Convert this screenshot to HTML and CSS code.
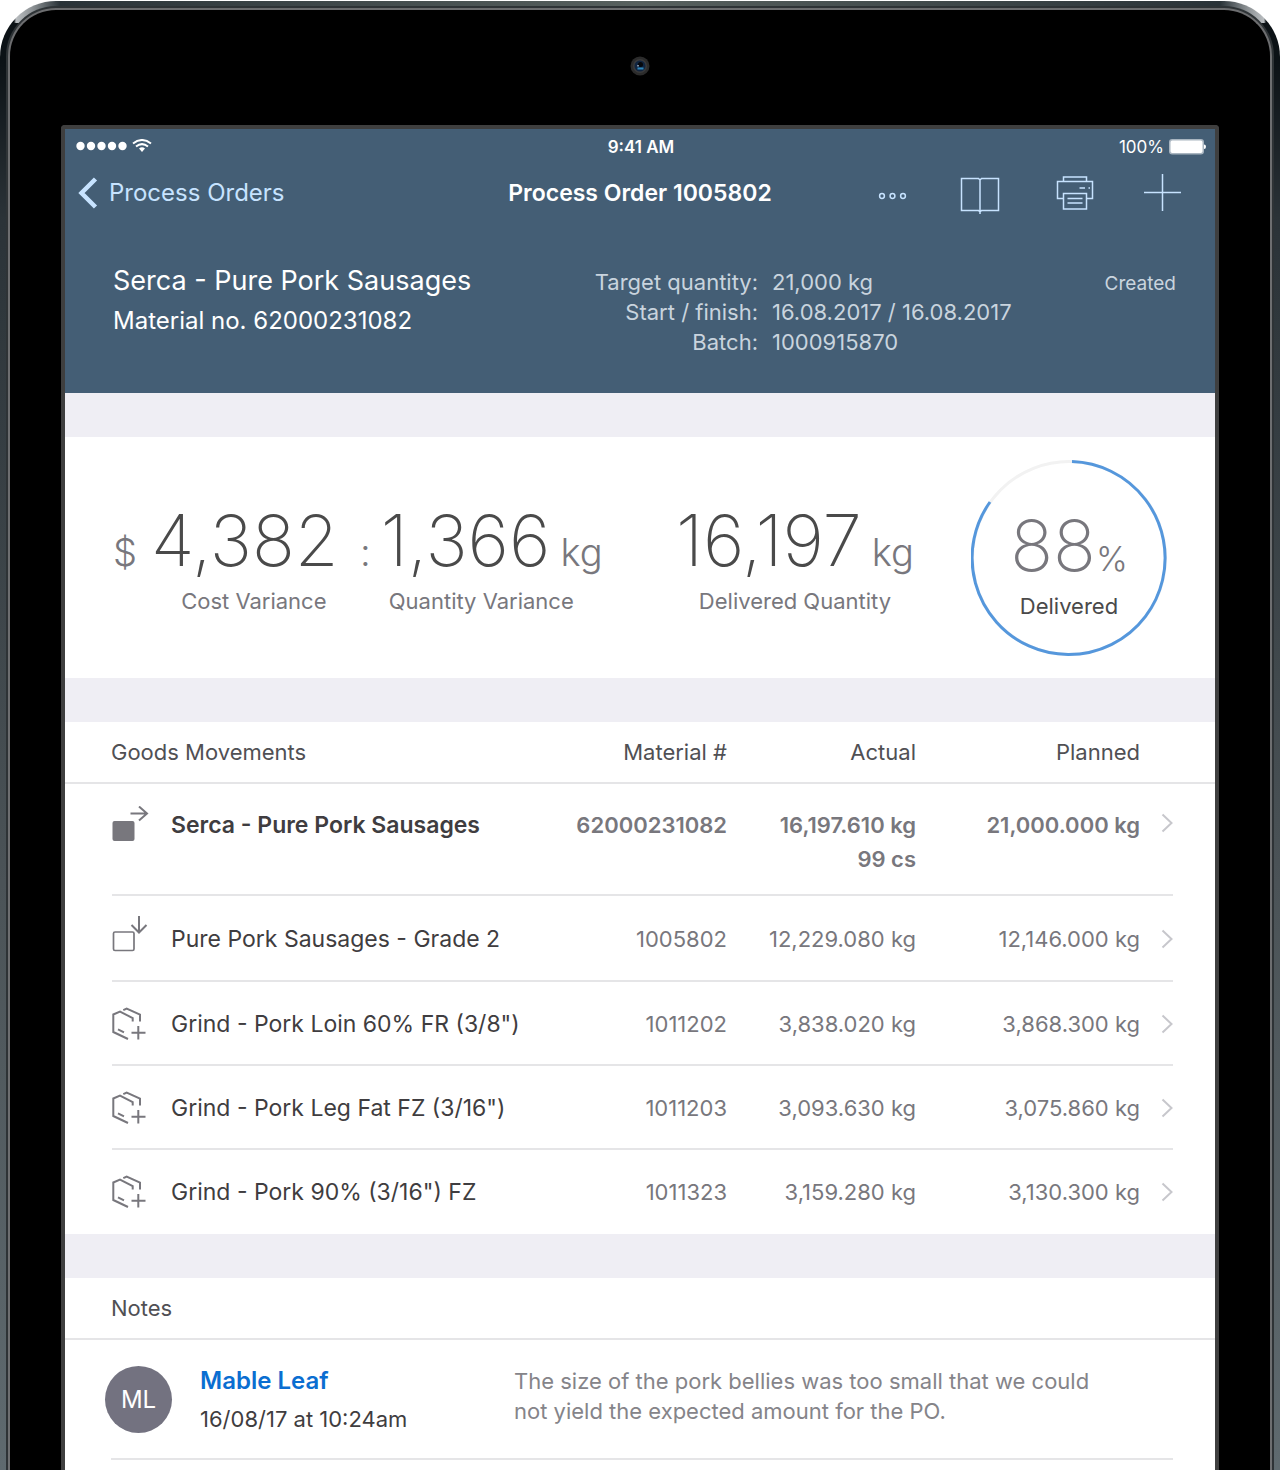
FILE: index.html
```html
<!DOCTYPE html>
<html lang="en">
<head>
<meta charset="utf-8">
<meta name="viewport" content="width=device-width, initial-scale=1">
<title>Process Order 1005802</title>
<link rel="stylesheet" href="styles.css">
</head>
<body>
<svg class="sprite" aria-hidden="true">
  <symbol id="chevron" viewBox="0 0 12 20"><path d="M1.5 1.500 10.500 10 1.500 18.500" fill="none" stroke="#c7c7cc" stroke-width="2"/></symbol>
  <symbol id="package" viewBox="0 0 36 36"><path d="M16 33 1.300 26V8.500L8 5.700 20.700 12V15.500M11.300 4.200 14.700 2.500 28 8.700V15.500M6 23.300 12 26.300M26.300 20V33.500M19.500 26.800H33.500" fill="none" stroke="#78777d" stroke-width="2"/></symbol>
</svg>
<div class="device">
  <div class="bezel">
    <svg class="camera" viewBox="0 0 20 20" aria-hidden="true">
      <circle cx="10" cy="10" r="9.500" fill="#2b2b2b"/>
      <circle cx="10" cy="10" r="7" fill="#3a3a3b"/>
      <circle cx="10" cy="10" r="5.500" fill="#10243f"/>
      <circle cx="10.500" cy="8.500" r="2.500" fill="#05070c"/>
      <rect x="7.500" y="11.500" width="6" height="2" fill="#2d86bb"/>
      <rect x="7" y="9" width="2" height="1.500" fill="#7d8ba0"/>
    </svg>
    <main class="screen">
      <header class="top">
        <div class="status">
          <span class="signal">
            <svg width="76" height="16" viewBox="0 2 76 16" role="img" aria-label="Full signal, Wi-Fi on">
              <g fill="#fff"><circle cx="4.500" cy="9" r="4.200"/><circle cx="15" cy="9" r="4.200"/><circle cx="25.500" cy="9" r="4.200"/><circle cx="36" cy="9" r="4.200"/><circle cx="46.500" cy="9" r="4.200"/></g>
              <g fill="none" stroke="#fff" stroke-width="2"><path d="M57 6.500Q66 -0.500 75 6.500"/><path d="M60 9.500Q66 4.800 72 9.500"/></g>
              <path d="M63 11.500Q66 9.200 69 11.500L66 15Z" fill="#fff"/>
            </svg>
          </span>
          <span class="time">9:41 AM</span>
          <span class="battery">100%
            <svg width="37" height="16" viewBox="0 0 37 16" aria-hidden="true">
              <rect x=".75" y=".75" width="33.500" height="14" rx="2.500" fill="#fff" stroke="#a9b5c0" stroke-width="1.500"/>
              <path d="M35 5.500q2 0 2 2.300t-2 2.300z" fill="#fff"/>
            </svg>
          </span>
        </div>
        <nav class="nav">
          <a class="back" href="#orders">
            <svg width="20" height="32" viewBox="0 0 20 32" aria-hidden="true"><path d="M17.500 2 3.500 16 17.500 30" fill="none" stroke="#c7e3ff" stroke-width="4.500"/></svg>
            Process Orders
          </a>
          <h1 class="title">Process Order 1005802</h1>
          <div class="actions">
            <button type="button" aria-label="More">
              <svg width="30" height="38" viewBox="0 0 30 38"><g fill="none" stroke="#c7e3ff" stroke-width="1.500"><circle cx="4" cy="22" r="2.400"/><circle cx="14.500" cy="22" r="2.400"/><circle cx="25" cy="22" r="2.400"/></g></svg>
            </button>
            <button type="button" aria-label="Manual">
              <svg class="book" width="46" height="38" viewBox="0 0 46 38"><path d="M22 6 20.500 4.500H3.500V36.500H20.500L22 38 23.500 36.500H40.500V4.500H23.500ZM22 5V40" fill="none" stroke="#c7e3ff" stroke-width="1.500"/></svg>
            </button>
            <button type="button" aria-label="Print">
              <svg width="40" height="38" viewBox="0 0 40 38"><g fill="none" stroke="#c7e3ff" stroke-width="1.500"><path d="M9.500 7.500V3H32.500V7.500M9.500 24.500H3.500V7.500H38.500V24.500H32.500"/><path d="M9.500 19.500H32.500V35H9.500ZM13.500 24.500H28.500M13.500 29H28.500M25.500 14H31M34.500 14H36"/></g></svg>
            </button>
            <button type="button" aria-label="Add">
              <svg width="38" height="38" viewBox="0 0 38 38"><path d="M18.500 0V37M0 18.500H37" fill="none" stroke="#c7e3ff" stroke-width="1.500"/></svg>
            </button>
          </div>
        </nav>
        <div class="summary">
          <div class="subject">
            <h2 class="product">Serca - Pure Pork Sausages</h2>
            <p class="material">Material no. 62000231082</p>
          </div>
          <dl class="facts">
            <dt>Target quantity:</dt><dd>21,000 kg</dd>
            <dt>Start / finish:</dt><dd>16.08.2017 / 16.08.2017</dd>
            <dt>Batch:</dt><dd>1000915870</dd>
          </dl>
          <p class="state">Created</p>
        </div>
      </header>

      <section class="panel kpis" aria-label="Key figures">
        <div class="kpi kpi-cost">
          <p class="figure"><span class="unit">$</span><span class="value">4,382</span></p>
          <p class="caption">Cost Variance</p>
        </div>
        <div class="kpi">
          <p class="figure"><span class="colon">:</span><span class="value">1,366</span><span class="unit">kg</span></p>
          <p class="caption">Quantity Variance</p>
        </div>
        <div class="kpi">
          <p class="figure"><span class="value">16,197</span><span class="unit">kg</span></p>
          <p class="caption">Delivered Quantity</p>
        </div>
        <div class="ring">
          <svg viewBox="0 0 196 196" aria-hidden="true">
            <circle cx="98" cy="98" r="96.500" fill="none" stroke="#f2f2f2" stroke-width="3"/>
            <path d="M101 1.550A96.500 96.500 0 1 1 19 42" fill="none" stroke="#5597dc" stroke-width="3"/>
          </svg>
          <p class="figure"><span class="value">88</span><span class="percent">%</span></p>
          <p class="caption">Delivered</p>
        </div>
      </section>

      <section class="panel">
        <table class="goods">
          <colgroup><col class="c-icon"><col><col class="c-material"><col class="c-actual"><col class="c-planned"><col class="c-open"></colgroup>
          <thead>
            <tr><th colspan="2" scope="col">Goods Movements</th><th scope="col">Material #</th><th scope="col">Actual</th><th scope="col">Planned</th><td></td></tr>
          </thead>
          <tbody>
            <tr class="main">
              <td class="icon"><svg viewBox="0 0 38 36" aria-hidden="true"><rect x="1.500" y="15" width="22" height="20" rx="2" fill="#78777d"/><path d="M19.500 7.500H36M28 0.500 36 7.500 28 14.500" fill="none" stroke="#78777d" stroke-width="2"/></svg></td>
              <th scope="row">Serca - Pure Pork Sausages</th><td>62000231082</td><td>16,197.610 kg<br>99 cs</td><td>21,000.000 kg</td>
              <td><a href="#62000231082" aria-label="Open 62000231082"><svg class="open"><use href="#chevron"/></svg></a></td>
            </tr>
            <tr class="second">
              <td class="icon"><svg viewBox="0 0 38 36" aria-hidden="true"><rect x="2.500" y="16" width="20.500" height="18.500" rx="1.500" fill="none" stroke="#78777d" stroke-width="1.700"/><path d="M28 0V16.500M20.500 9 28 16.500 35.500 9" fill="none" stroke="#78777d" stroke-width="2"/></svg></td>
              <th scope="row">Pure Pork Sausages - Grade 2</th><td>1005802</td><td>12,229.080 kg</td><td>12,146.000 kg</td>
              <td><a href="#1005802" aria-label="Open 1005802"><svg class="open"><use href="#chevron"/></svg></a></td>
            </tr>
            <tr>
              <td class="icon"><svg aria-hidden="true"><use href="#package"/></svg></td>
              <th scope="row">Grind - Pork Loin 60% FR (3/8")</th><td>1011202</td><td>3,838.020 kg</td><td>3,868.300 kg</td>
              <td><a href="#1011202" aria-label="Open 1011202"><svg class="open"><use href="#chevron"/></svg></a></td>
            </tr>
            <tr>
              <td class="icon"><svg aria-hidden="true"><use href="#package"/></svg></td>
              <th scope="row">Grind - Pork Leg Fat FZ (3/16")</th><td>1011203</td><td>3,093.630 kg</td><td>3,075.860 kg</td>
              <td><a href="#1011203" aria-label="Open 1011203"><svg class="open"><use href="#chevron"/></svg></a></td>
            </tr>
            <tr>
              <td class="icon"><svg aria-hidden="true"><use href="#package"/></svg></td>
              <th scope="row">Grind - Pork 90% (3/16") FZ</th><td>1011323</td><td>3,159.280 kg</td><td>3,130.300 kg</td>
              <td><a href="#1011323" aria-label="Open 1011323"><svg class="open"><use href="#chevron"/></svg></a></td>
            </tr>
          </tbody>
        </table>
      </section>

      <section class="panel notes">
        <h2 class="notes-title">Notes</h2>
        <article class="note">
          <span class="avatar" aria-hidden="true">ML</span>
          <div class="author">
            <a class="name" href="#mable-leaf">Mable Leaf</a>
            <time datetime="2017-08-16T10:24">16/08/17 at 10:24am</time>
          </div>
          <p class="message">The size of the pork bellies was too small that we could not yield the expected amount for the PO.</p>
        </article>
      </section>
    </main>
  </div>
</div>
</body>
</html>
```
FILE: styles.css
```css
* { box-sizing: border-box; }

body {
  display: flex;
  min-height: 100vh;
  margin: 0;
  background: #fff;
  color: #78777d;
  font: 22px/30px Inter, "Liberation Sans", sans-serif;
}

h1, h2, p, dl, dd { margin: 0; font-weight: 400; }
a { color: inherit; text-decoration: none; }
svg { display: block; flex: none; }
.sprite { position: absolute; width: 0; height: 0; }

/* Tablet body */
.device {
  flex: 1;
  display: flex;
  margin-top: 1px;
  padding: 7px 8px 0;
  border-radius: 56px 56px 0 0;
  background:
    linear-gradient(90deg, transparent 14px, #b9bdc0 16px, #8e9396 32px, #2a3338 60px, transparent 61px) left top / 62px 22px no-repeat,
    linear-gradient(270deg, transparent 14px, #b9bdc0 16px, #8e9396 32px, #2a3338 60px, transparent 61px) right top / 62px 22px no-repeat,
    linear-gradient(90deg, #2a3338, #58615f 50%, #2a3338) center top / calc(100% - 120px) 8px no-repeat,
    linear-gradient(#0c1216 60px, #2b3338 220px, #4b5357 60%, #5f6a6f);
}

.bezel {
  flex: 1;
  display: flex;
  flex-direction: column;
  border: 2px solid #6d6e70;
  border-bottom: 0;
  border-radius: 48px 48px 0 0;
  padding: 46px 51px 0;
  background: #000;
  box-shadow: 0 0 0 2px #2e3336;
}

.camera { width: 20px; height: 20px; margin: 0 auto 49px; }

.screen {
  flex: 1;
  display: flex;
  flex-direction: column;
  gap: 44px;
  border: 4px solid #3f3f3f;
  border-bottom: 0;
  border-radius: 4px 4px 0 0;
  background: #efeef4;
}

/* Header */
.top { padding-bottom: 36px; background: #445e75; color: #fff; }

.status {
  display: grid;
  grid-template-columns: 1fr auto 1fr;
  align-items: center;
  height: 36px;
  padding: 0 9px 0 11px;
  font-size: 17px;
}
.time { font-weight: 600; }
.battery { display: flex; justify-content: flex-end; align-items: center; gap: 5px; }

.nav {
  display: grid;
  grid-template-columns: 1fr auto 1fr;
  align-items: center;
  height: 56px;
  padding: 0 13px;
}
.back { display: flex; align-items: center; gap: 11px; color: #c7e3ff; font-size: 24px; }
.title { font-size: 23px; font-weight: 600; }
.actions { display: flex; justify-content: flex-end; gap: 50px; padding-right: 20px; }
.actions button { padding: 0; border: 0; background: none; }
.book { overflow: visible; }

.summary {
  display: grid;
  grid-template-columns: 1fr auto 164px;
  padding: 40px 39px 0 48px;
}
.subject { line-height: 40px; white-space: nowrap; }
.product { font-size: 27px; }
.material { font-size: 24px; }
.facts {
  display: grid;
  grid-template-columns: auto 240px;
  column-gap: 14px;
  align-content: start;
  padding: 6px 0 0;
  color: #c9d4de;
}
.facts dt { text-align: right; }
.facts dd { white-space: nowrap; }
.state { padding-top: 8px; text-align: right; color: #c9d4de; font-size: 19px; }

.panel { background: #fff; }

/* Key figures */
.kpis {
  display: grid;
  grid-template-columns: 247fr 316fr 295fr 196px;
  justify-items: start;
  align-items: center;
  padding: 23px 48px 22px;
}
.kpi { display: flex; flex-direction: column; align-items: center; }
.kpi .caption { margin-top: -6px; }
.figure { display: flex; align-items: baseline; line-height: 80px; white-space: nowrap; }
.value { color: #4a4a4a; font-size: 71px; font-weight: 150; }
.unit { font-size: 38px; font-weight: 300; margin-left: 10px; }
.kpi-cost .unit { margin: 0 14px 0 0; }
.kpi-cost .caption { padding-left: 56px; }
.colon { font-size: 38px; font-weight: 300; margin-right: 10px; }

.ring {
  display: grid;
  grid-template-rows: 131px 65px;
  justify-items: center;
}
.ring > * { grid-column: 1; }
.ring svg { grid-row: 1 / 3; width: 196px; height: 196px; }
.ring .figure { grid-row: 1; align-self: end; margin-bottom: -8px; }
.ring .caption { grid-row: 2; color: #4a4a4a; }
.ring .value { color: #78777d; }
.percent { font-size: 34px; font-weight: 300; }

/* Goods movements */
.goods { width: 100%; table-layout: fixed; border-collapse: collapse; text-align: right; }
.c-icon { width: 106px; }
.c-material { width: 170px; }
.c-actual { width: 189px; }
.c-planned { width: 224px; }
.c-open { width: 75px; }
.goods th, .goods td { padding: 0; white-space: nowrap; }
.goods th { font-weight: 400; }
.goods thead th { height: 62px; padding-bottom: 2px; color: #505054; }
.goods thead th:first-child { padding-left: 46px; text-align: left; }
.goods thead tr { background: linear-gradient(#e5e5e7, #e5e5e7) left bottom / 100% 2px no-repeat; }
.goods tbody tr {
  height: 84px;
  background: linear-gradient(#e5e5e7, #e5e5e7) 47px 100% / calc(100% - 89px) 2px no-repeat;
}
.goods tbody tr:last-child { background: none; }
.goods tbody .second { height: 86px; }
.goods tbody th { color: #3f3d40; font-size: 23px; text-align: left; }
.goods .main { height: 112px; line-height: 34px; }
.goods .main > * { padding-top: 24px; vertical-align: top; font-weight: 600; }
.goods .main .icon { padding-top: 22px; }
.goods .icon { padding-left: 46px; }
.icon svg { width: 38px; height: 36px; }
.second .icon svg { margin-bottom: 10px; }
.open { width: 12px; height: 20px; margin-left: 21px; }
.main .open { margin-top: 5px; }

/* Notes */
.notes { flex: 1; }
.notes-title { padding: 15px 46px; border-bottom: 2px solid #e5e5e7; color: #505054; font-size: 22px; }
.note {
  display: grid;
  grid-template-columns: 67px 286px 580px;
  column-gap: 28px;
  align-items: start;
  padding: 26px 40px;
  background: linear-gradient(#e5e5e7, #e5e5e7) 46px 118px / calc(100% - 88px) 2px no-repeat;
}
.avatar {
  display: grid;
  place-items: center;
  width: 67px;
  height: 67px;
  border-radius: 50%;
  background: #737280;
  color: #fff;
  font-size: 24px;
}
.author { display: grid; row-gap: 8px; color: #3f3d40; }
.name { color: #0a6ed1; font-size: 24px; font-weight: 600; }
.message { color: #858489; }
```
